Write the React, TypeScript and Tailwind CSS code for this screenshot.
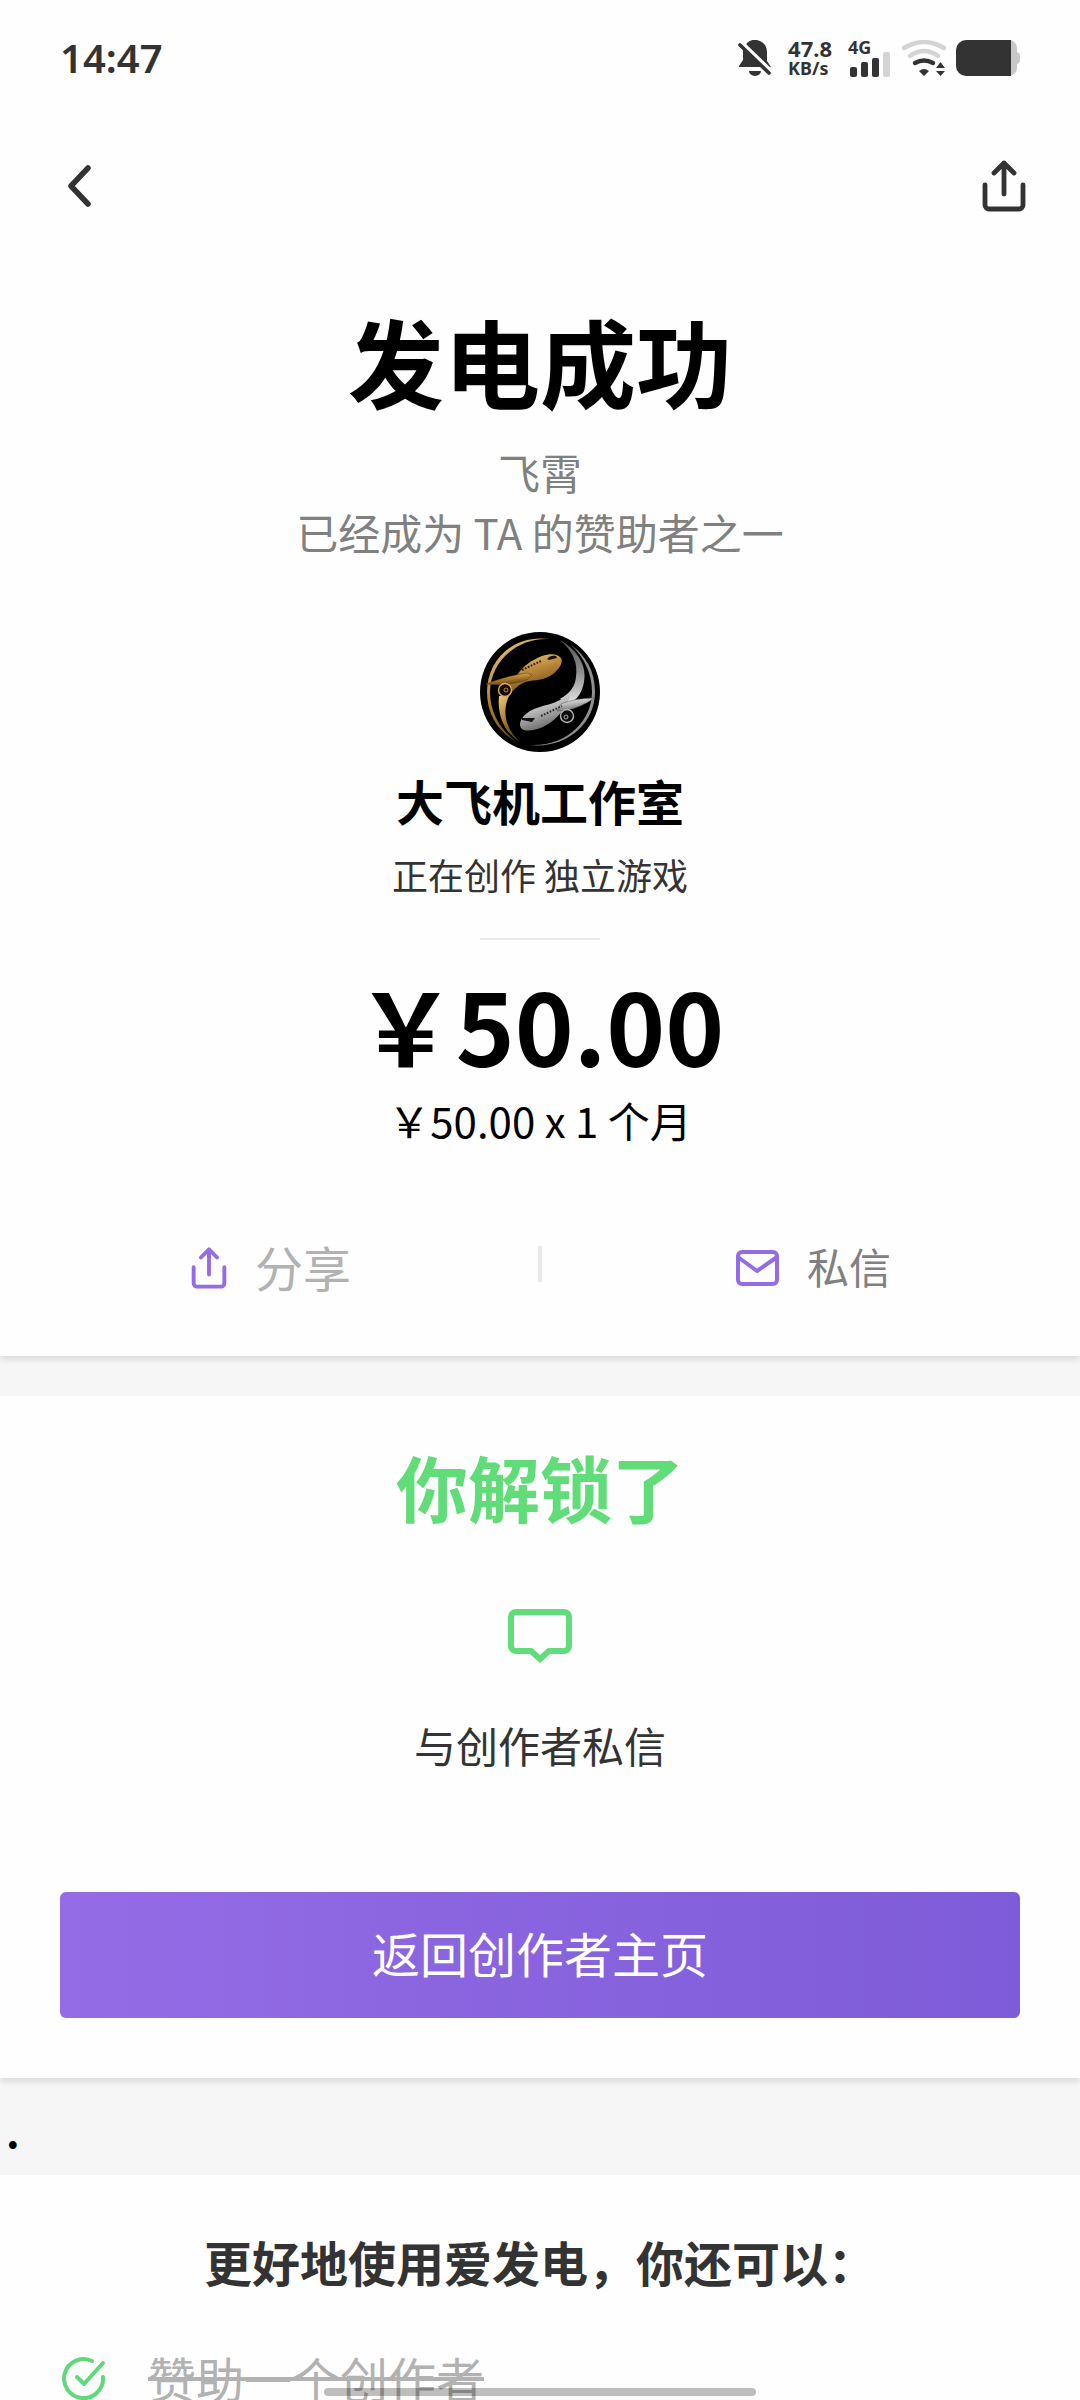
import type { ReactNode } from 'react';

function ShareIcon({ className }: { className: string }) {
  return (
    <svg className={className} viewBox="0 0 44 52" fill="none" stroke="currentColor" strokeWidth="4.8" strokeLinecap="round" strokeLinejoin="round">
      <path d="M3 25v20a4 4 0 0 0 4 4h30a4 4 0 0 0 4-4V25" />
      <path d="M22 34V3M12 13L22 3l10 10" />
    </svg>
  );
}

function MailIcon() {
  return (
    <svg className="h-9 w-11" viewBox="0 0 44 36" fill="none" stroke="currentColor" strokeWidth="4" strokeLinejoin="round">
      <rect x="3" y="2" width="39" height="32" rx="4" />
      <path d="M3 7l19 14L42 7" />
    </svg>
  );
}

function Avatar() {
  return (
    <svg className="size-[120px]" viewBox="0 0 120 120" role="img" aria-label="大飞机工作室">
      <defs>
        <linearGradient id="gold" x1="0" y1="0" x2="0.4" y2="1">
          <stop offset="0" stopColor="#f0cf86" />
          <stop offset="0.5" stopColor="#b98738" />
          <stop offset="1" stopColor="#6b4716" />
        </linearGradient>
        <linearGradient id="silver" x1="0" y1="0" x2="0.4" y2="1">
          <stop offset="0" stopColor="#f4f4f4" />
          <stop offset="0.5" stopColor="#bdbdbd" />
          <stop offset="1" stopColor="#6a6a6a" />
        </linearGradient>
        <linearGradient id="tail" x1="0" y1="0" x2="0" y2="1">
          <stop offset="0" stopColor="#555" />
          <stop offset="0.5" stopColor="#8d8d8d" />
          <stop offset="1" stopColor="#e4e4e4" />
        </linearGradient>
      </defs>
      <circle cx="60" cy="60" r="60" fill="#000" />
      <path d="M70 7C33 2 7 28 7 60c0 23 12 41 30 50C20 98 10 80 10 60 10 31 36 5 70 7z" fill="url(#gold)" />
      <path d="M50 113c36 4 65-21 65-53 0-21-9-36-24-47 13 12 21 28 21 47 0 29-26 55-62 53z" fill="#8f8f8f" />
      <path d="M19 64l11-2c-8 15-6 33 9 47C25 101 17 84 19 64z" fill="url(#gold)" />
      <path d="M80 8c19 11 27 27 24 42-2 11-7 17-13 21l-11-4c10-6 15-12 16-22 2-14-3-26-16-37z" fill="url(#tail)" />
      <path d="M38 42c5-8 14-14 24-18 9-3 16-2 19 2 3 5-3 13-11 18-10 6-18 3-27 7-6 3-10 7-14 13l-4-11z" fill="url(#gold)" />
      <path d="M6 52c13-5 27-9 41-11l5 2-5 5c-13 4-27 6-41 4z" fill="url(#gold)" stroke="#5b3d12" strokeWidth="0.5" />
      <path d="M42 38l19-9" stroke="#3a2408" strokeWidth="2" strokeDasharray="1.8 1.4" />
      <path d="M67 27c2-3 6-4 9-3l1 2-8 2z" fill="#171006" />
      <circle cx="25" cy="58" r="6.5" fill="#120c04" stroke="#d8ad5a" strokeWidth="1.4" />
      <circle cx="26" cy="58" r="2" fill="none" stroke="#b58c45" />
      <path d="M91 60c-3 15-14 28-28 35-9 4-19 5-22 1-3-5 1-12 9-17 13-7 23-5 34-14z" fill="url(#silver)" />
      <path d="M114 66c-8 6-17 10-27 12l-10 1 4-7c10-4 21-6 33-6z" fill="url(#silver)" stroke="#555" strokeWidth="0.5" />
      <path d="M61 84l21-10" stroke="#333" strokeWidth="2" strokeDasharray="1.8 1.4" />
      <path d="M42 86l13 0-3 4-10-2z" fill="#111" />
      <circle cx="87" cy="84" r="6.5" fill="#0b0b0b" stroke="#b5b5b5" strokeWidth="1.4" />
      <circle cx="86" cy="85" r="2" fill="none" stroke="#aaa" />
    </svg>
  );
}

function StatusBar() {
  return (
    <div className="flex h-[116px] items-center justify-between px-[60px] text-[#333]">
      <time className="font-['Noto_Sans','Noto_Sans_CJK_SC',sans-serif] text-[40px] leading-[40px] font-semibold">14:47</time>
      <div className="flex h-9 items-center">
        <svg className="mr-4 h-9 w-[34px]" viewBox="0 0 34 36">
          <path d="M9 3a12 12 0 0 1 20 9v9l4 6H1v-1l4-6V11z" fill="currentColor" />
          <path d="M11 31h12a6 5 0 0 1-12 0z" fill="currentColor" />
          <path d="M4 3l30 29" stroke="#fff" strokeWidth="4" />
          <path d="M2 5l29 28" stroke="currentColor" strokeWidth="3.6" strokeLinecap="round" />
        </svg>
        <div className="mr-4 font-['Noto_Sans',sans-serif] font-bold">
          <div className="text-[22px] leading-[20px]">47.8</div>
          <div className="text-[18px] leading-[20px]">KB/s</div>
        </div>
        <div className="mr-3 flex flex-col">
          <span className="font-['Noto_Sans',sans-serif] text-[18px] leading-4 font-bold">4G</span>
          <svg className="-mt-1 h-[26px] w-[42px]" viewBox="0 0 42 26" fill="currentColor">
            <rect x="2" y="16" width="7" height="10" rx="2" />
            <rect x="13" y="11" width="7" height="15" rx="2" />
            <rect x="24" y="7" width="7" height="19" rx="2" />
            <rect x="35" y="1" width="7" height="25" rx="2" fill="#d4d4d4" />
          </svg>
        </div>
        <svg className="mr-2.5 h-9 w-11" viewBox="0 0 44 36" fill="none" strokeWidth="4.4" strokeLinecap="round">
          <path d="M2 8Q22-4 42 8M8 16Q22 6 36 16" stroke="#d4d4d4" />
          <path d="M13 23q9-5 18 0" stroke="#333" />
          <path d="M17 31q5-4 10 0l-5 5zM34 28h9l-4.5-6zM34 31h9l-4.5 5z" fill="#333" />
        </svg>
        <svg className="h-9 w-16" viewBox="0 0 64 36">
          <path d="M52 0h2a8 8 0 0 1 7 8v4q3 1 3 4v4q0 3-3 4v4a8 8 0 0 1-7 8h-2z" fill="#c8c8c8" />
          <path d="M10 0h45v36H10A10 10 0 0 1 0 26V10A10 10 0 0 1 10 0z" fill="#333" />
        </svg>
      </div>
    </div>
  );
}

function Panel({ children, className }: { children: ReactNode; className: string }) {
  return (
    <section className={`flex flex-col items-center bg-[#fefefe] ${className}`}>
      {children}
    </section>
  );
}

export default function App() {
  return (
    <div className="relative h-screen w-full overflow-hidden bg-[#f6f6f6] font-['Noto_Sans_CJK_SC',sans-serif] text-black">
      <Panel className="pb-[54px] shadow-[0_4px_6px_rgba(0,0,0,0.1)]">
        <header className="w-full text-[#333]">
          <StatusBar />
          <div className="flex h-[140px] items-center justify-between pl-[68px] pr-[54px]">
            <button type="button" aria-label="返回">
              <svg className="h-[42px] w-6" viewBox="0 0 24 42" fill="none" stroke="currentColor" strokeWidth="5.5" strokeLinecap="round" strokeLinejoin="round">
                <path d="M20 3L3 21l17 18" />
              </svg>
            </button>
            <button type="button" aria-label="分享">
              <ShareIcon className="h-[52px] w-11" />
            </button>
          </div>
        </header>

        <h1 className="mt-12 text-[96px] leading-[112px] font-bold">发电成功</h1>
        <p className="mt-[26px] text-center text-[42px] leading-[60px] text-[#808080]">
          飞霄
          <br />
          已经成为 TA 的赞助者之一
        </p>
        <div className="mt-[70px]">
          <Avatar />
        </div>
        <h2 className="mt-4 text-[48px] leading-[64px] font-bold">大飞机工作室</h2>
        <p className="mt-[18px] text-[36px] leading-[48px] text-[#333]">正在创作 独立游戏</p>
        <hr className="mt-10 w-[120px] border-t-2 border-[#eaeaea]" />
        <div className="mt-6 text-[100px] leading-[120px] font-bold">￥50.00</div>
        <p className="mt-1.5 text-[42px] leading-[60px]">￥50.00 x 1 个月</p>

        <div className="mt-20 flex w-full items-center">
          <button type="button" className="flex flex-1 items-center justify-center gap-7 pl-1 text-[48px] leading-[72px] text-[#b2b2b2]">
            <ShareIcon className="mt-1 h-[42px] w-9 text-[#946ce6]" />
            分享
          </button>
          <div className="-mt-1 h-9 w-1 bg-[#e8e8e8]" />
          <button type="button" className="flex flex-1 items-center justify-center gap-7 pl-1 text-[42px] leading-[72px] text-[#808080]">
            <span className="mt-1 text-[#946ce6]">
              <MailIcon />
            </span>
            私信
          </button>
        </div>
      </Panel>

      <Panel className="mt-10 px-[60px] pb-[60px] shadow-[0_4px_6px_rgba(0,0,0,0.1)]">
        <h2 className="mt-[42px] text-[72px] leading-[96px] font-bold text-[#60dc78]">你解锁了</h2>
        <svg className="mt-[75px] h-[54px] w-16 text-[#60dc78]" viewBox="0 0 64 54" fill="none" stroke="currentColor" strokeWidth="6">
          <path d="M8 3h48a5 5 0 0 1 5 5v29a5 5 0 0 1-5 5H41l-9 8-9-8H8a5 5 0 0 1-5-5V8a5 5 0 0 1 5-5z" />
        </svg>
        <p className="mt-[52px] text-[42px] leading-[60px] text-[#333]">与创作者私信</p>
        <button type="button" className="mt-[117px] h-[126px] w-full rounded-md bg-linear-to-r from-[#946ce6] to-[#7e5bd8] pb-1.5 text-[48px] text-white">
          返回创作者主页
        </button>
      </Panel>

      <div className="flex h-[97px] items-center pt-1.5 pl-1.5">
        <span className="text-[42px] leading-[60px] font-bold">.</span>
      </div>

      <Panel className="px-[60px]">
        <h2 className="mt-[54px] text-[48px] leading-[64px] font-bold text-[#333]">更好地使用爱发电，你还可以：</h2>
        <ul className="mt-12 w-full">
          <li className="flex items-center gap-[42px] pl-0.5 text-[48px] leading-[72px] text-[#b2b2b2]">
            <svg className="mt-1 size-11 text-[#60d87c]" viewBox="0 0 44 44" fill="none" stroke="currentColor" strokeWidth="4" strokeLinecap="round" strokeLinejoin="round">
              <path d="M30 4a19.5 19.5 0 1 0 11 16" />
              <path d="M15 20l7 7L41 6" />
            </svg>
            <del>赞助一个创作者</del>
          </li>
        </ul>
      </Panel>

      <div className="absolute bottom-1 left-1/2 h-2 w-[432px] -translate-x-1/2 rounded-full bg-black/25" />
    </div>
  );
}
